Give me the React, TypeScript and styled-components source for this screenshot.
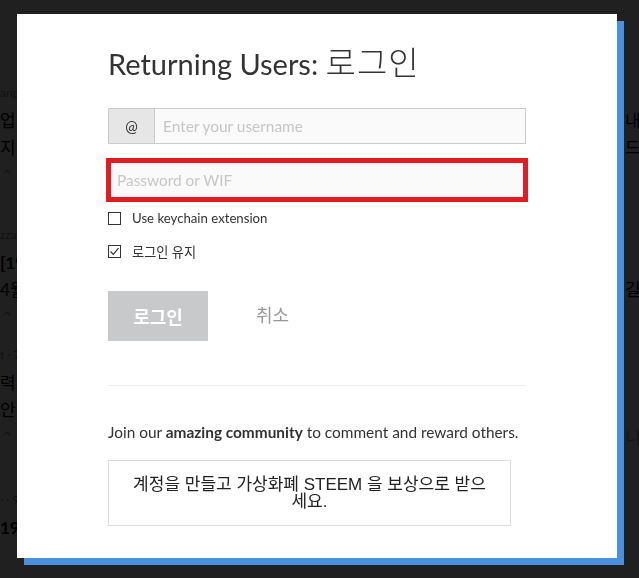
import React from 'react';
import styled, { createGlobalStyle } from 'styled-components';

const GlobalStyle = createGlobalStyle`
  html, body {
    margin: 0;
    padding: 0;
  }
  body {
    background: #fff;
    font-family: Lato, 'Noto Sans CJK KR', sans-serif;
    overflow: hidden;
  }
  * {
    box-sizing: border-box;
  }
`;

const Page = styled.div`
  width: 639px;
  height: 578px;
  overflow: hidden;
  position: relative;
`;

const Feed = styled.div`
  padding-top: 85px;
`;

const FeedPost = styled.div<{ $space: number }>`
  margin-top: ${p => p.$space}px;
  display: flex;
  flex-direction: column;
`;

const FeedRow = styled.div<{ $kind: 'meta' | 'title' | 'icon'; $bold?: boolean }>`
  display: grid;
  grid-template-columns: 625px 1fr;
  white-space: nowrap;
  overflow: hidden;
  height: ${p => (p.$kind === 'meta' ? 16 : p.$kind === 'title' ? 27 : 30)}px;
  line-height: ${p => (p.$kind === 'meta' ? 16 : p.$kind === 'title' ? 27 : 30)}px;
  font-size: ${p => (p.$kind === 'meta' ? 12 : 17)}px;
  font-weight: ${p => (p.$bold ? 700 : 400)};
  color: ${p => (p.$kind === 'meta' ? '#888' : p.$kind === 'icon' ? '#aaa' : '#000')};
  &:nth-child(2) {
    margin-top: 6px;
  }
`;

const Overlay = styled.div`
  position: fixed;
  inset: 0;
  background: rgba(0, 0, 0, 0.875);
  padding: 14px 0 0 17px;
`;

const Modal = styled.div`
  width: 600px;
  background: #fff;
  box-shadow: 7px 7px 0 #4a90dc;
`;

const ModalBody = styled.div`
  width: 418px;
  margin: 0 auto;
  padding: 32px 0 32px;
  color: #333;
`;

const Title = styled.h3`
  margin: 0 0 26px;
  height: 36px;
  font-size: 29px;
  font-weight: 400;
  line-height: 36px;
  color: #333;
  white-space: nowrap;
`;

const TitleKo = styled.span`
  font-family: 'Noto Sans CJK KR', sans-serif;
  font-size: 33px;
  font-weight: 300;
  line-height: 0;
  letter-spacing: 1px;
`;

const InputGroup = styled.div`
  display: flex;
  height: 36px;
  margin-bottom: 16px;
`;

const Addon = styled.span`
  width: 46px;
  display: flex;
  align-items: center;
  justify-content: center;
  background: #e6e6e6;
  border: 1px solid #cacaca;
  border-right: none;
  border-radius: 2px 0 0 2px;
  font-size: 15px;
  color: #333;
`;

const TextField = styled.input`
  flex: 1;
  min-width: 0;
  border: 1px solid #cacaca;
  background: #fafafa;
  padding: 0 8px;
  font-family: inherit;
  font-size: 15.4px;
  color: #333;
  outline: none;
  &::placeholder {
    color: #c6c6c6;
  }
`;

const PasswordField = styled.input`
  display: block;
  width: 100%;
  height: 40px;
  border: 3px solid #e31c24;
  outline: 2px solid #e31c24;
  background: #fafafa;
  padding: 0 6px;
  margin: 0 0 8px;
  font-family: inherit;
  font-size: 15.4px;
  &::placeholder {
    color: #c6c6c6;
  }
`;

const CheckRow = styled.label<{ $last?: boolean }>`
  display: flex;
  align-items: center;
  gap: 11px;
  height: 20px;
  font-size: 13.2px;
  color: #333;
  margin-bottom: ${p => (p.$last ? 0 : 13)}px;
`;

const Box = styled.span`
  width: 13px;
  height: 13px;
  border: 1px solid #333;
  background: #fff;
  display: flex;
  align-items: center;
  justify-content: center;
`;

const Actions = styled.div`
  display: flex;
  align-items: center;
  gap: 48px;
  margin-top: 30px;
`;

const LoginButton = styled.button`
  width: 100px;
  height: 50px;
  border: none;
  background: #c8c9ca;
  color: #fff;
  font-family: inherit;
  font-size: 18px;
  font-weight: 700;
`;

const CancelButton = styled.button`
  border: none;
  background: none;
  padding: 0 0 4px;
  color: #999;
  font-family: inherit;
  font-size: 18px;
`;

const Divider = styled.hr`
  margin: 44px 0 0;
  border: none;
  border-top: 1px solid #eee;
`;

const JoinText = styled.p`
  margin: 36px 0 18px;
  font-size: 15.4px;
  line-height: 20px;
  color: #333;
  strong {
    font-weight: 700;
  }
`;

const SignupBox = styled.div`
  width: 403px;
  border: 1px solid #ddd;
  padding: 15px 22px;
  font-family: 'Liberation Sans', 'Noto Sans CJK KR', sans-serif;
  font-size: 17px;
  line-height: 17px;
  text-align: center;
  color: #222;
`;

const Check = ({ checked, label, last }: { checked?: boolean; label: string; last?: boolean }) => (
  <CheckRow $last={last}>
    <Box>
      {checked && (
        <svg width="11" height="11" viewBox="0 0 11 11">
          <path d="M1.5 5.5 L4.3 8.3 L9.5 2.2" fill="none" stroke="#333" strokeWidth="1.2" />
        </svg>
      )}
    </Box>
    {label}
  </CheckRow>
);

const posts = [
  { space: 0, meta: 'anpigon · 3시간 전', lines: [['업비트 소식을 전합니다', '내'], ['지난주 정리', '드']], bold: false },
  { space: 36, meta: 'zzan · 5시간 전', lines: [['[19/04] 주간 리포트', ''], ['4월 셋째 주', '길']], bold: true },
  { space: 14, meta: 't · 7시간 전', lines: [['력사 속 이야기', ''], ['안녕하세요', '']], bold: false },
  { space: 39, meta: '· · 9시간 전', lines: [['19일 일기', '']], bold: true },
];

export default function App() {
  return (
    <>
      <GlobalStyle />
      <Page>
        <Feed>
          {posts.map((post, i) => (
            <FeedPost key={i} $space={post.space}>
              <FeedRow $kind="meta">
                <span>{post.meta}</span>
                <span />
              </FeedRow>
              {post.lines.map(([left, right], j) => (
                <FeedRow key={j} $kind="title" $bold={post.bold && j === 0}>
                  <span>{left}</span>
                  <span>{right}</span>
                </FeedRow>
              ))}
              {i < 3 && (
                <FeedRow $kind="icon">
                  <span>⌃ 12</span>
                  <span>{i === 2 ? '니' : ''}</span>
                </FeedRow>
              )}
            </FeedPost>
          ))}
        </Feed>
        <Overlay>
          <Modal>
            <ModalBody>
              <Title>
                Returning Users: <TitleKo>로그인</TitleKo>
              </Title>
              <InputGroup>
                <Addon>@</Addon>
                <TextField placeholder="Enter your username" />
              </InputGroup>
              <PasswordField type="password" placeholder="Password or WIF" />
              <Check label="Use keychain extension" />
              <Check checked label="로그인 유지" last />
              <Actions>
                <LoginButton>로그인</LoginButton>
                <CancelButton>취소</CancelButton>
              </Actions>
              <Divider />
              <JoinText>
                Join our <strong>amazing community</strong> to comment and reward others.
              </JoinText>
              <SignupBox>계정을 만들고 가상화폐 STEEM 을 보상으로 받으세요.</SignupBox>
            </ModalBody>
          </Modal>
        </Overlay>
      </Page>
    </>
  );
}
